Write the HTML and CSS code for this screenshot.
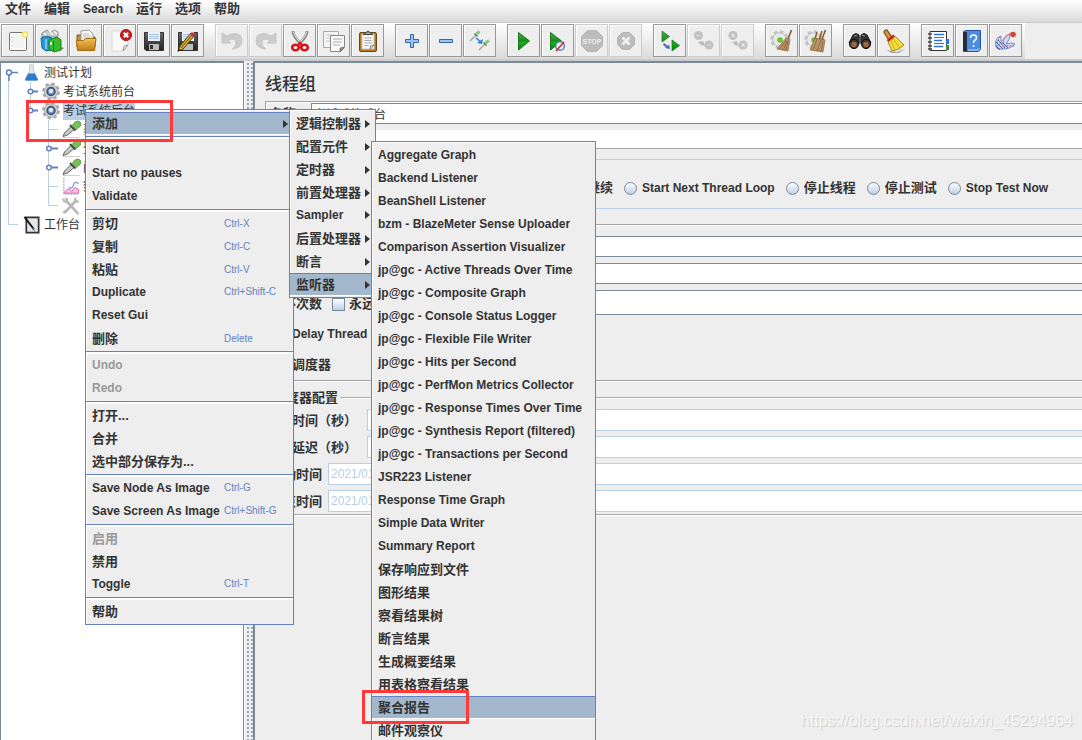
FILE: index.html
```html
<!DOCTYPE html>
<html lang="zh-CN">
<head>
<meta charset="utf-8">
<title>线程组</title>
<link rel="stylesheet" href="styles.css">
</head>
<body>
<svg class="defs" width="0" height="0" aria-hidden="true">
  <defs>
    <linearGradient id="green" x1="0" y1="0" x2="0" y2="1"><stop offset="0" stop-color="#4fae4f"/><stop offset=".5" stop-color="#178a1b"/><stop offset=".55" stop-color="#19b51c"/><stop offset="1" stop-color="#0a7a10"/></linearGradient>
    <linearGradient id="gold" x1="0" y1="0" x2="0" y2="1"><stop offset="0" stop-color="#f3c253"/><stop offset="1" stop-color="#c07c14"/></linearGradient>
    <linearGradient id="dark" x1="0" y1="0" x2="0" y2="1"><stop offset="0" stop-color="#666"/><stop offset="1" stop-color="#222"/></linearGradient>
    <symbol id="gear" viewBox="0 0 20 20"><circle cx="10" cy="10" r="8" fill="none" stroke="#a8a8a8" stroke-width="2.800" stroke-dasharray="3.600 2.680"/><circle cx="10" cy="10" r="7" fill="#d6d6d6" stroke="#a0a0a0"/><circle cx="10" cy="10" r="4.200" fill="#6f92cc" stroke="#3b4a68" stroke-width="1.500"/><circle cx="10" cy="9.600" r="2.200" fill="#e6effc"/></symbol>
    <symbol id="dropper" viewBox="0 0 20 19"><path d="M2 17.500h17" stroke="#d0d0d0"/><path d="M2 16.500 3.500 13 10 6.500l3 3L6.500 15z" fill="#c9c9c9" stroke="#555" stroke-width=".9"/><path d="m9 5 5.500 5.500" stroke="#3c4a3a" stroke-width="2"/><path d="m11 5.500 3-3.500q3-2 5 0t0 4.500L15 9.500z" fill="#79c05d" stroke="#4a9440" stroke-width=".8"/></symbol>
    <symbol id="gearbroom" viewBox="0 0 24 24"><circle cx="9.500" cy="10.500" r="7.500" fill="none" stroke="#c4c4c4" stroke-width="3.500" stroke-dasharray="3.500 2.390"/><circle cx="9.500" cy="10.500" r="6.800" fill="#e9e9e9" stroke="#bbb"/><circle cx="10" cy="11" r="2.800" fill="#6bbf32"/><path d="M21.500 1 18 10" stroke="#8a5a2d" stroke-width="1.600"/><path d="m16 9 4 1-2 12-11-2z" fill="#b99469" stroke="#8a6744" stroke-width=".7"/><path d="m16 11-6 9m7-8-3.500 9m4.500-9-2 9" stroke="#7b5734" stroke-width=".7"/></symbol>
  </defs>
</svg>

<div class="app">
  <nav class="menubar" aria-label="主菜单">
    <button type="button" class="zh">文件</button>
    <button type="button" class="zh">编辑</button>
    <button type="button">Search</button>
    <button type="button" class="zh">运行</button>
    <button type="button" class="zh">选项</button>
    <button type="button" class="zh">帮助</button>
  </nav>

  <div class="toolbar" role="toolbar">
    <div class="group">
      <button type="button" aria-label="New"><svg viewBox="0 0 24 24"><rect x="3.500" y="3.500" width="17" height="18" rx="1" fill="#f3f3f3" stroke="#777"/><path d="M5 5h14v15H5z" fill="none" stroke="#fff"/><path d="M6 8v10" stroke="#bbb" stroke-dasharray="1 3"/><circle cx="19" cy="5.500" r="2.500" fill="#fffde0" stroke="#efe35e" stroke-width="1.600"/></svg></button>
      <button type="button" aria-label="Templates"><svg viewBox="0 0 24 24"><path d="M2 8V4l5-3 3 3 4-3 4 2v5z" fill="#c7cacc" stroke="#8e9295"/><path d="m4 4 3 3m2-5 4 4m1-4 3 3" stroke="#f5f5f5" stroke-width="1.500"/><path d="m1 9 6-2 5 2v12l-6 1-4-3z" fill="#2b98d6" stroke="#166a9d"/><path d="M6 10v10" stroke="#cceeff"/><path d="m9 11 8-3 4 3v10l-7 2-5-3z" fill="#36bc2e" stroke="#188117"/><path d="M13.500 12v10" stroke="#178218"/><path d="M11 13v3" stroke="#fff" stroke-width="1.500"/><path d="m21 18 3 1-3 2z" fill="#777"/></svg></button>
      <button type="button" aria-label="Open"><svg viewBox="0 0 24 24"><path d="M3 18V6h6l2 2h10v10z" fill="#c98f2f" stroke="#8a5a12"/><path d="m7 2 8-1 4 4v9H7z" fill="#fafafa" stroke="#999"/><path d="M9 5h6m-6 2h8m-8 2h8" stroke="#bbb"/><path d="M2.500 11.500h7l2-2h10.500l-1.500 12h-17z" fill="url(#gold)" stroke="#a56b11"/></svg></button>
      <button type="button" aria-label="Close"><svg viewBox="0 0 24 24"><path d="M4 2h16v14l-5 6H4z" fill="#fafafa" stroke="#d8d8d8"/><path d="m20 16-4 1-1 5z" fill="#eee" stroke="#888" stroke-width=".8"/><circle cx="18" cy="6" r="5.500" fill="#ca2020" stroke="#a41111"/><path d="m15.800 3.800 4.400 4.400m0-4.400-4.400 4.400" stroke="#fff" stroke-width="2"/></svg></button>
      <button type="button" aria-label="Save"><svg viewBox="0 0 24 24"><path d="M2.500 3.500h19v18H4l-1.500-1.500z" fill="url(#dark)" stroke="#333"/><path d="M6 3h12v9H6z" fill="#eef3fb"/><path d="M7 5.500h10m-10 2h10m-10 2h10" stroke="#a7c1e1"/><path d="M7 15h10v6H7z" fill="#bdbdbd"/><path d="M8 16h3v4H8z" fill="#333"/></svg></button>
      <button type="button" aria-label="Save as"><svg viewBox="0 0 24 24"><path d="M2.500 3.500h19v18H4l-1.500-1.500z" fill="url(#dark)" stroke="#333"/><path d="M6 3h12v9H6z" fill="#eef3fb"/><path d="M7 5.500h10m-10 2h10m-10 2h10" stroke="#a7c1e1"/><path d="M7 15h10v6H7z" fill="#bdbdbd"/><path d="m2 22 2-5L15 4l3 3L7 20z" fill="#f3bf28" stroke="#3d3010"/><path d="m5 19 11-13" stroke="#3d3010"/><path d="m14 5 3 3 2-3-3-2z" fill="#c33"/><path d="m1.500 22.500 1-3 2 2z" fill="#111"/></svg></button>
    </div>
    <div class="group">
      <button type="button" disabled aria-label="Undo"><svg viewBox="0 0 24 24"><path d="M2 4v10h9l-3-3q8-3 8 3 0 4-4 6 10-1 10-8 0-9-11-7L7 7z" fill="#ccc" stroke="#c4c4c4"/></svg></button>
      <button type="button" disabled aria-label="Redo"><svg viewBox="0 0 24 24"><path d="M22 4v10h-9l3-3q-8-3-8 3 0 4 4 6-10-1-10-8 0-9 11-7l4 2z" fill="#ccc" stroke="#c4c4c4"/></svg></button>
      <button type="button" aria-label="Cut"><svg viewBox="0 0 24 24"><path d="M5 2q0 5 7 12m7-12q0 5-7 12" stroke="#888" stroke-width="3" fill="none"/><path d="M5.300 2.500q1 5 6.700 11m6.700-11q-1 5-6.700 11" stroke="#eee" fill="none"/><ellipse cx="7.500" cy="18.500" rx="3.300" ry="2.800" fill="none" stroke="#d3141c" stroke-width="2.600"/><ellipse cx="16.500" cy="18.500" rx="3.300" ry="2.800" fill="none" stroke="#d3141c" stroke-width="2.600"/><path d="m12 13-2 4m2-4 2 4" stroke="#d3141c" stroke-width="2"/></svg></button>
      <button type="button" aria-label="Copy"><svg viewBox="0 0 24 24"><path d="M1.500 2.500h15v16h-15z" fill="#f5f5f5" stroke="#aaa"/><path d="M4 6h9m-9 3h9m-9 3h9" stroke="#ccc"/><path d="M8.500 6.500h14v12l-4 4h-10z" fill="#fafafa" stroke="#888"/><path d="M11 10h9m-9 3h9m-9 3h7" stroke="#aaa"/><path d="m22 18-4 1v4z" fill="#999" stroke="#555" stroke-width=".6"/></svg></button>
      <button type="button" aria-label="Paste"><svg viewBox="0 0 24 24"><rect x="3.500" y="3.500" width="17" height="19" rx="1.500" fill="#b7771d" stroke="#6b4712"/><path d="M6 5h12v15H6z" fill="#f6f6f6" stroke="#c8c8c8"/><path d="M8.500 9h7m-7 2.500h7m-7 2.500h7m-7 2.500h4" stroke="#aaa"/><path d="M7.500 5.500q0-2 2.500-2 2-3 4 0 2.500 0 2.500 2z" fill="#9a9a92" stroke="#44443e"/><path d="m18 16-3.500.5-.5 4z" fill="#ddd" stroke="#777" stroke-width=".7"/></svg></button>
    </div>
    <div class="group">
      <button type="button" aria-label="Expand"><svg viewBox="0 0 24 24"><path d="M10.500 5.500h3v5h5v3h-5v5h-3v-5h-5v-3h5z" fill="#9cc3ea" stroke="#3465a4"/></svg></button>
      <button type="button" aria-label="Collapse"><svg viewBox="0 0 24 24"><path d="M5.500 10.500h13v3h-13z" fill="#9cc3ea" stroke="#3465a4"/></svg></button>
      <button type="button" aria-label="Toggle"><svg viewBox="0 0 24 24"><path d="m2 12 6-6m3 15 6-6" stroke="#aaa" stroke-width="1.600"/><path d="m6.500 4.500 3 3m6 6 3 3" stroke="#5c6a58" stroke-width="1.300"/><path d="m8.500 5 3-2.500m5.500 12 4-3" stroke="#8cc874" stroke-width="3"/><path d="m8 9 5 4" stroke="#2d7de0" stroke-width="1.600"/><path d="m15 10-1 5-5-1z" fill="#2d7de0"/></svg></button>
    </div>
    <div class="group">
      <button type="button" aria-label="Start"><svg viewBox="0 0 24 24"><path d="m6.500 3.500 11 8.500-11 9z" fill="url(#green)" stroke="#17731a"/></svg></button>
      <button type="button" aria-label="Start no pauses"><svg viewBox="0 0 24 24"><path d="m4.500 3.500 11 8.500-11 9z" fill="url(#green)" stroke="#17731a"/><circle cx="14" cy="17" r="4.300" fill="#f5f7fb" stroke="#527fbd" stroke-width="1.500"/><path d="m10 22 8-9" stroke="#d1272d" stroke-width="1.600"/></svg></button>
      <button type="button" disabled aria-label="Stop"><svg viewBox="0 0 24 24"><path d="M7.500 1.500h9l6 6v9l-6 6h-9l-6-6v-9z" fill="#bcbcbc" stroke="#b4b4b4"/><text x="12" y="15" text-anchor="middle" class="stop-text">STOP</text></svg></button>
      <button type="button" disabled aria-label="Shutdown"><svg viewBox="0 0 24 24"><path d="M8.500 3.500h7l5 5v7l-5 5h-7l-5-5v-7z" fill="#bcbcbc" stroke="#b4b4b4"/><path d="m8.500 8.500 7 7m0-7-7 7" stroke="#eee" stroke-width="3"/></svg></button>
    </div>
    <div class="group">
      <button type="button" aria-label="Remote start all"><svg viewBox="0 0 24 24"><path d="m4 2 7.500 5.500L4 13zm10 9 7.500 5.500L14 22z" fill="url(#green)" stroke="#17731a" stroke-width=".7"/><path d="m6 14 4 3 1-2 1 5-5-1 1-1-3-2z" fill="#3f6fb0"/></svg></button>
      <button type="button" disabled aria-label="Remote stop all"><svg viewBox="0 0 24 24"><circle cx="6.500" cy="6.500" r="4.500" fill="#c2c2c2"/><circle cx="17" cy="16" r="4.500" fill="#c2c2c2"/><path d="M4 6.500h5m5.500 9.500h5" stroke="#ddd"/><path d="m6 13 5-1 2 5-4-1z" fill="#bbb"/></svg></button>
      <button type="button" disabled aria-label="Remote shutdown all"><svg viewBox="0 0 24 24"><circle cx="7" cy="6.500" r="4.500" fill="#c2c2c2"/><circle cx="17" cy="16" r="4.500" fill="#c2c2c2"/><path d="m5.500 5 3 3m0-3-3 3m10 6.500 3 3m0-3-3 3" stroke="#e4e4e4" stroke-width="1.300"/><path d="m6 13 5-1 2 5-4-1z" fill="#bbb"/></svg></button>
    </div>
    <div class="group">
      <button type="button" aria-label="Clear"><svg><use href="#gearbroom"/></svg></button>
      <button type="button" aria-label="Clear all"><svg viewBox="0 0 24 24"><use href="#gearbroom" width="24" height="24"/><path d="m18 2-3 9m-2-8-2 7" stroke="#8a5a2d" stroke-width="1.500"/><path d="m11 9 10 2-2 12-13-2z" fill="#b99469" stroke="#8a6744" stroke-width=".7"/><path d="m13 10-4 11m8-10-4 11m6-10-2 10" stroke="#7b5734" stroke-width=".7"/></svg></button>
    </div>
    <div class="group">
      <button type="button" aria-label="Search"><svg viewBox="0 0 24 24"><path d="M5 6q3-3 6 0v3h2V6q3-3 6 0l4 8H1z" fill="#333" stroke="#111"/><path d="M11 8h2v6h-2z" fill="#555"/><circle cx="6" cy="15" r="4.600" fill="#3a3a3a" stroke="#111"/><circle cx="18" cy="15" r="4.600" fill="#3a3a3a" stroke="#111"/><circle cx="6" cy="15.500" r="2.700" fill="#a4643e"/><circle cx="18" cy="15.500" r="2.700" fill="#a4643e"/><path d="M6 7l3-1m5 0 3 1" stroke="#999"/></svg></button>
      <button type="button" aria-label="Reset search"><svg viewBox="0 0 24 24"><path d="m5 21 10 2 8-3-6 4H9z" fill="#aaa"/><path d="m4 3 4 6" stroke="#7a4b16" stroke-width="5" stroke-linecap="round"/><path d="m4 3 4 6" stroke="#d7993f" stroke-width="3" stroke-linecap="round"/><path d="m6 13 7-6 9 9q-4 5-12 6z" fill="#f3dd3c" stroke="#a98d15"/><path d="m9 12 4 9m-2-11 7 9" stroke="#c4a922"/><path d="m5.500 12 6.500-5.500" stroke="#cc2020" stroke-width="2.500"/></svg></button>
    </div>
    <div class="group">
      <button type="button" aria-label="Function helper"><svg viewBox="0 0 24 24"><path d="M4 2.500h16.500v19H4z" fill="#fff" stroke="#333"/><path d="M20 10h3v5h-3z" fill="#2674d9"/><path d="M20 16h3v5h-3z" fill="#348d36"/><path d="M8 5.500h10M8 11.500h8M8 17.500h9" stroke="#2778dc" stroke-width="1.500"/><path d="M8 8.500h10M8 14.500h10" stroke="#2778dc"/><path d="M2 5h4M2 9h4m-4 4h4m-4 4h4m-4 3h4" stroke="#444" stroke-width="1.300"/></svg></button>
      <button type="button" aria-label="Help"><svg viewBox="0 0 24 24"><path d="M3.500 2.500 6 1.500h14.500v19L18 22.500H3.500z" fill="#4b8be0" stroke="#26549a"/><path d="M3 3h4v19H3z" fill="#222d3c"/><path d="M8 21h10l2-2" stroke="#ddd" fill="none"/><path d="M10.500 9q0-3 3-3t3 2.500q0 2-2 3-1 .8-1 2.500m0 2v2" fill="none" stroke="#fff" stroke-width="1.500"/></svg></button>
      <button type="button" aria-label="Feather"><svg viewBox="0 0 24 24"><path d="M2 18Q0 9 7 7q-1 6 2 8 0-8 7-10 0 6-4 10 5-2 9 0-5 6-16 5z" fill="#cfdcf0" stroke="#6d8fc4"/><path d="M3 20Q9 8 17 4M4 20q7-4 16-3M3 18q0-6 3-10" fill="none" stroke="#de5a5a" stroke-dasharray="2 1"/><path d="m2 13 7 7m-5-9 7 8m-2-5 5 5M2 17l4 4" stroke="#4a63b0"/><circle cx="19" cy="5.500" r="2.800" fill="#d0453c"/></svg></button>
    </div>
  </div>

  <div class="workspace">
    <aside class="tree-panel">
      <ul class="tree">
        <li class="node"><svg class="handle" viewBox="0 0 20 19"><path d="M7 9v9M8 9.500h8" stroke="#6382bf" stroke-width="1.500"/><circle cx="7" cy="9.500" r="2.500" fill="#fff" stroke="#6382bf" stroke-width="1.500"/></svg><svg class="ico" viewBox="0 0 20 20"><path d="M7.500 2h4v6l4.500 9q.5 1.500-1 1.500H4q-1.500 0-1-1.500l4.500-9z" fill="#dfe9f3" stroke="#b9c6d2"/><path d="M6 11h7l3 6q.5 1.500-1 1.500H4q-1.500 0-1-1.500z" fill="#2b7ccc"/></svg><span>测试计划</span></li>
        <li class="node level1"><svg class="handle" viewBox="0 0 20 19"><path d="M8.500 0v19" stroke="#b8cfe5"/><path d="M9 9.500h7" stroke="#6382bf" stroke-width="2"/><circle cx="8.500" cy="9.500" r="2.300" fill="#fff" stroke="#6382bf" stroke-width="1.500"/></svg><svg class="ico"><use href="#gear"/></svg><span>考试系统前台</span></li>
        <li class="node level1 selected"><svg class="handle" viewBox="0 0 20 19"><path d="M8.500 0v9" stroke="#b8cfe5"/><path d="M9 9.500h7" stroke="#6382bf" stroke-width="2"/><circle cx="8.500" cy="9.500" r="2.300" fill="#fff" stroke="#6382bf" stroke-width="1.500"/></svg><svg class="ico"><use href="#gear"/></svg><span>考试系统后台</span></li>
        <li class="node level2"><svg class="handle" viewBox="0 0 20 19"><path d="M7.500 0v19M8 9.500h9" stroke="#b8cfe5"/></svg><svg class="ico"><use href="#dropper"/></svg><span>获取</span></li>
        <li class="node level2"><svg class="handle" viewBox="0 0 20 19"><path d="M7.500 0v19" stroke="#b8cfe5"/><path d="M9 9.500h8" stroke="#6382bf" stroke-width="2"/><circle cx="8" cy="9.500" r="2.300" fill="#fff" stroke="#6382bf" stroke-width="1.500"/></svg><svg class="ico"><use href="#dropper"/></svg><span>登录</span></li>
        <li class="node level2"><svg class="handle" viewBox="0 0 20 19"><path d="M7.500 0v19" stroke="#b8cfe5"/><path d="M9 9.500h8" stroke="#6382bf" stroke-width="2"/><circle cx="8" cy="9.500" r="2.300" fill="#fff" stroke="#6382bf" stroke-width="1.500"/></svg><svg class="ico"><use href="#dropper"/></svg><span>阅卷</span></li>
        <li class="node level2"><svg class="handle" viewBox="0 0 20 19"><path d="M7.500 0v19M8 9.500h9" stroke="#b8cfe5"/></svg><svg class="ico" viewBox="0 0 20 20"><path d="M2.500 1v17H18" stroke="#8894b5" fill="none" stroke-dasharray="2 1"/><path d="m3 16 4-4 4 3 3-4 4 2v4H3z" fill="#f8c3e0" stroke="#d966a8"/><path d="M8 11q4 2 5-4 2-3 5 0" fill="none" stroke="#7fa5dc" stroke-width="1.500"/></svg><span>察看</span></li>
        <li class="node level2"><svg class="handle" viewBox="0 0 20 19"><path d="M7.500 0v9.500H17" fill="none" stroke="#b8cfe5"/></svg><svg class="ico" viewBox="0 0 20 20"><path d="M5 5 16 17M15 5 4 17" stroke="#b8b8b8" stroke-width="2.800"/><path d="M2 2.500q0 4 4 3.500m-1-4 1 3m9-3q-2 4 3 4M2 18l3-3m13 4-4-4" fill="none" stroke="#b8b8b8" stroke-width="2.500"/></svg><span></span></li>
        <li class="node"><svg class="handle" viewBox="0 0 20 19"><path d="M6 9.500h10" stroke="#b8cfe5"/></svg><svg class="ico" viewBox="0 0 20 20"><path d="M4 2.500h13v16H4z" fill="#e3e7ea" stroke="#333" stroke-width="1.800"/><path d="m2 2 10 13" stroke="#111" stroke-width="2"/><path d="m11 13 3 5-4-3z" fill="#777"/></svg><span>工作台</span></li>
      </ul>
    </aside>
    <div class="splitter"></div>
    <main class="editor">
      <h1>线程组</h1>
      <div class="naming">
        <div class="field"><label for="name" class="zh">名称：</label><input id="name" type="text" value="考试系统后台"></div>
        <div class="field comment"><label for="comment" class="zh">注释：</label><input id="comment" type="text"></div>
      </div>
      <div class="on-error" role="radiogroup">
        <label class="zh"><input type="radio" name="error">继续</label>
        <label><input type="radio" name="error">Start Next Thread Loop</label>
        <label class="zh"><input type="radio" name="error">停止线程</label>
        <label class="zh"><input type="radio" name="error">停止测试</label>
        <label><input type="radio" name="error">Stop Test Now</label>
      </div>
      <section class="threads">
        <div class="field"><label for="threads" class="zh">线程数：</label><input id="threads" type="text"></div>
        <div class="field"><label for="ramp" class="zh">时间：</label><input id="ramp" type="text"></div>
        <div class="field loops"><label for="loops" class="zh">循环次数</label><label class="check zh"><input type="checkbox">永远</label><input id="loops" type="text"></div>
        <label class="check"><input type="checkbox">Delay Thread creation until needed</label>
        <label class="check zh"><input type="checkbox">调度器</label>
      </section>
      <fieldset class="schedule">
        <legend class="zh">调度器配置</legend>
        <div class="field"><label for="duration" class="zh">持续时间（秒）</label><input id="duration" type="text" disabled></div>
        <div class="field"><label for="delay" class="zh">启动延迟（秒）</label><input id="delay" type="text" disabled></div>
        <div class="field date"><label for="from" class="zh">启动时间</label><input id="from" type="text" value="2021/01/" disabled></div>
        <div class="field date"><label for="to" class="zh">结束时间</label><input id="to" type="text" value="2021/01/" disabled></div>
      </fieldset>
    </main>
  </div>
</div>

<ul class="menu context" role="menu">
  <li><button type="button" class="zh active more">添加</button></li>
  <li class="sep"></li>
  <li><button type="button">Start</button></li>
  <li><button type="button">Start no pauses</button></li>
  <li><button type="button">Validate</button></li>
  <li class="sep"></li>
  <li><button type="button" class="zh"><span>剪切</span><kbd>Ctrl-X</kbd></button></li>
  <li><button type="button" class="zh"><span>复制</span><kbd>Ctrl-C</kbd></button></li>
  <li><button type="button" class="zh"><span>粘贴</span><kbd>Ctrl-V</kbd></button></li>
  <li><button type="button"><span>Duplicate</span><kbd>Ctrl+Shift-C</kbd></button></li>
  <li><button type="button">Reset Gui</button></li>
  <li><button type="button" class="zh"><span>删除</span><kbd>Delete</kbd></button></li>
  <li class="sep"></li>
  <li><button type="button" disabled>Undo</button></li>
  <li><button type="button" disabled>Redo</button></li>
  <li class="sep"></li>
  <li><button type="button" class="zh">打开...</button></li>
  <li><button type="button" class="zh">合并</button></li>
  <li><button type="button" class="zh">选中部分保存为...</button></li>
  <li class="sep"></li>
  <li><button type="button"><span>Save Node As Image</span><kbd>Ctrl-G</kbd></button></li>
  <li><button type="button"><span>Save Screen As Image</span><kbd>Ctrl+Shift-G</kbd></button></li>
  <li class="sep"></li>
  <li><button type="button" class="zh" disabled>启用</button></li>
  <li><button type="button" class="zh">禁用</button></li>
  <li><button type="button"><span>Toggle</span><kbd>Ctrl-T</kbd></button></li>
  <li class="sep"></li>
  <li><button type="button" class="zh">帮助</button></li>
</ul>

<ul class="menu add" role="menu">
  <li><button type="button" class="zh more">逻辑控制器</button></li>
  <li><button type="button" class="zh more">配置元件</button></li>
  <li><button type="button" class="zh more">定时器</button></li>
  <li><button type="button" class="zh more">前置处理器</button></li>
  <li><button type="button" class="more">Sampler</button></li>
  <li><button type="button" class="zh more">后置处理器</button></li>
  <li><button type="button" class="zh more">断言</button></li>
  <li><button type="button" class="zh active more">监听器</button></li>
</ul>

<ul class="menu listeners" role="menu">
  <li><button type="button">Aggregate Graph</button></li>
  <li><button type="button">Backend Listener</button></li>
  <li><button type="button">BeanShell Listener</button></li>
  <li><button type="button">bzm - BlazeMeter Sense Uploader</button></li>
  <li><button type="button">Comparison Assertion Visualizer</button></li>
  <li><button type="button">jp@gc - Active Threads Over Time</button></li>
  <li><button type="button">jp@gc - Composite Graph</button></li>
  <li><button type="button">jp@gc - Console Status Logger</button></li>
  <li><button type="button">jp@gc - Flexible File Writer</button></li>
  <li><button type="button">jp@gc - Hits per Second</button></li>
  <li><button type="button">jp@gc - PerfMon Metrics Collector</button></li>
  <li><button type="button">jp@gc - Response Times Over Time</button></li>
  <li><button type="button">jp@gc - Synthesis Report (filtered)</button></li>
  <li><button type="button">jp@gc - Transactions per Second</button></li>
  <li><button type="button">JSR223 Listener</button></li>
  <li><button type="button">Response Time Graph</button></li>
  <li><button type="button">Simple Data Writer</button></li>
  <li><button type="button">Summary Report</button></li>
  <li><button type="button" class="zh">保存响应到文件</button></li>
  <li><button type="button" class="zh">图形结果</button></li>
  <li><button type="button" class="zh">察看结果树</button></li>
  <li><button type="button" class="zh">断言结果</button></li>
  <li><button type="button" class="zh">生成概要结果</button></li>
  <li><button type="button" class="zh">用表格察看结果</button></li>
  <li><button type="button" class="zh active">聚合报告</button></li>
  <li><button type="button" class="zh">邮件观察仪</button></li>
</ul>

<div class="mark mark-add"></div>
<div class="mark mark-report"></div>
<div class="watermark">https://blog.csdn.net/weixin_45294964</div>
</body>
</html>
```
FILE: styles.css
```css
* { box-sizing: border-box; }

body {
  margin: 0;
  height: 100vh;
  overflow: hidden;
  position: relative;
  background: #eee;
  color: #333;
  font: bold 12px/18px "Liberation Sans", "Noto Sans CJK SC", sans-serif;
}

button, input { font: inherit; color: inherit; margin: 0; }
ul { list-style: none; margin: 0; padding: 0; }
.zh { font-size: 13px; }
.defs { position: absolute; }

.app { display: flex; flex-direction: column; height: 100vh; }

.menubar {
  display: flex;
  gap: 13px;
  height: 23px;
  padding: 0 5px;
  background: linear-gradient(#fff, #dadada);
  border-bottom: 1px solid #ccc;
}
.menubar button { border: 0; padding: 0; background: none; line-height: 18px; height: 18px; }

.toolbar {
  display: flex;
  gap: 11px;
  height: 38px;
  padding: 1px;
  background: linear-gradient(#fff, #dadada) 0 0 / 1025px 36px no-repeat #eee;
  border-bottom: 2px solid #ccc;
}
.group { display: flex; gap: 1px; }
.toolbar button {
  display: flex;
  align-items: center;
  justify-content: center;
  width: 33px;
  height: 33px;
  padding: 0;
  border: 1px solid #999;
  background: #eee;
  box-shadow: inset 1px 1px #fff;
}
.toolbar button:disabled { border-color: #ccc; }
.toolbar svg { width: 24px; height: 24px; fill: none; }
.stop-text { font: bold 7px "Liberation Sans", sans-serif; fill: #eee; }

.workspace { display: flex; flex: 1; min-height: 0; }
.tree-panel { width: 244px; border: 2px solid #7a8a99; border-right-width: 1px; border-left-width: 1px; border-bottom: 0; background: #fff; }
.tree {
  padding-left: 1px;
  background: linear-gradient(#b8cfe5, #b8cfe5) 7px 10px / 1px 151px no-repeat;
}
.node { display: flex; align-items: center; height: 19px; font-weight: normal; }
.node span { height: 18px; margin-left: 2px; white-space: nowrap; }
.level1 { padding-left: 20px; }
.level2 { padding-left: 39px; }
.level1 span { margin-left: 2px; }
.selected span { background: #b8cfe5; }
.handle { width: 20px; height: 19px; flex: none; }
.ico { width: 20px; height: 19px; flex: none; }
.level1 .handle { margin-right: -1px; }

.splitter {
  width: 9px;
  border-left: 1px solid #fff;
  background:
    radial-gradient(circle at 1px 1px, #9aa6b2 1px, transparent 1px) 2px 2px / 4px 4px,
    #eee;
}

.editor { flex: 1; min-width: 0; border: 2px solid #7a8a99; border-right: 0; border-bottom: 0; padding-left: 10px; }
.editor h1 { margin: 0; padding-top: 6px; font-size: 17px; line-height: 32px; font-weight: 500; }
.field { display: flex; align-items: center; height: 21px; }
.field > input { flex: 1; min-width: 0; height: 100%; border: 1px solid #7a8a99; border-right: 0; border-radius: 0; background: #fff; padding: 0 2px; font-weight: normal; }
.field > input:disabled { border-color: #b8cfe5; color: #b8cfe5; }

.naming { border: 1px solid #a3a3a3; border-right: 0; box-shadow: inset 1px 1px #fff; padding: 1px 0 0 4px; display: flex; flex-direction: column; gap: 6px; }
.naming label { width: 41px; }
.naming .comment { height: 18px; }
.naming .comment input { border-width: 0; }

.on-error {
  display: flex;
  align-items: center;
  gap: 11px;
  height: 50px;
  margin-top: 10px;
  padding: 8px 0 0 304px;
  border: solid #b8cfe5;
  border-width: 1px 0;
  white-space: nowrap;
}
.on-error label { display: flex; align-items: center; gap: 5px; }
input[type="radio"], input[type="checkbox"] {
  appearance: none;
  flex: none;
  width: 13px;
  height: 13px;
  border: 1px solid #7a8a99;
  background: linear-gradient(#fff, #b8cfe5);
}
input[type="radio"] { border-radius: 50%; }

.threads {
  display: flex;
  flex-direction: column;
  gap: 6px;
  height: 157px;
  margin-top: 15px;
  padding: 11px 0 0 5px;
  border: solid #a3a3a3;
  border-width: 1px 0;
  box-shadow: inset 0 1px #fff, 0 1px #fff;
}
.threads .field > label:first-child { width: 62px; }
.threads .loops { height: 25px; }
.threads .loops label { padding-top: 3px; }
.threads .loops .check { padding-right: 40px; }
.check { display: flex; align-items: center; gap: 4px; }
.threads > .check { height: 25px; padding-left: 5px; }

.schedule { margin: 8px 0 0; padding: 2px 0 2px 1px; border: 2px groove #fff; border-width: 2px 0; display: flex; flex-direction: column; gap: 5px; min-width: 0; }
.schedule legend { margin-left: 5px; padding: 0 2px; line-height: 18px; }
.schedule .field { height: 22px; }
.schedule .field label { width: 101px; padding-top: 1px; }
.schedule .date label { width: 62px; padding-left: 4px; }

.menu { position: absolute; padding: 2px 0 1px; border: 1px solid #6382bf; background: #eee; box-shadow: inset 1px 1px #fff; }
.menu button {
  display: flex;
  align-items: center;
  width: 100%;
  height: 23px;
  padding: 0 6px 2px;
  border: solid transparent;
  border-width: 1px 0;
  background: none;
  text-align: left;
  white-space: nowrap;
}
.menu .zh { padding-bottom: 0; }
.menu button:disabled { color: #999; }
.menu .active { background: #a3b8cc; border-top-color: #6382bf; border-bottom-color: #fff; }
.menu .more::after { content: ""; margin-left: auto; border: 4px solid transparent; border-left: 5px solid #333; border-right: 0; }
.menu .sep { height: 4px; padding-top: 1px; }
.menu .sep::before { content: ""; display: block; height: 2px; border-top: 1px solid #6382bf; background: #fff; }
.menu kbd { font: 10px/18px "Liberation Sans", sans-serif; color: #6382bf; }
.context { left: 85px; top: 109px; width: 209px; }
.context span { width: 132px; }
.context .more { padding-right: 5px; }
.add { left: 289px; top: 109px; width: 87px; }
.add .more { padding-right: 5px; }
.listeners { left: 371px; top: 141px; width: 225px; }

.mark { position: absolute; border: 3px solid #ff3838; pointer-events: none; }
.mark-add { left: 26px; top: 100px; width: 147px; height: 42px; }
.mark-report { left: 362px; top: 690px; width: 107px; height: 34px; }
.watermark { position: absolute; right: 9px; bottom: 10px; font: 16px/18px "Liberation Sans", sans-serif; color: #f6f6f6; text-shadow: 1px 1px 1px #ccc; }
```
